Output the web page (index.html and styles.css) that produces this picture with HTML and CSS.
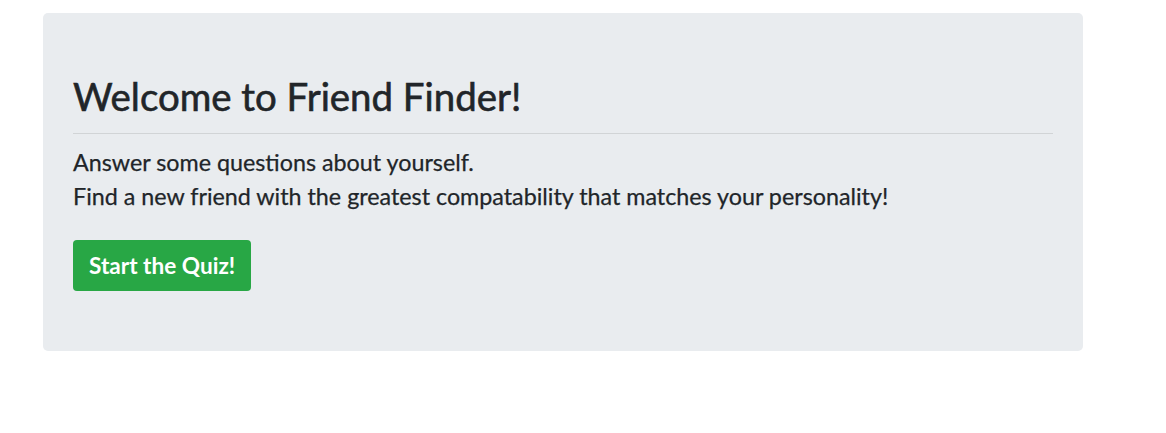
FILE: index.html
```html
<!DOCTYPE html>
<html lang="en">
<head>
<meta charset="utf-8">
<title>Friend Finder</title>
<link rel="stylesheet" href="styles.css">
</head>
<body>
<div class="container">
  <div class="jumbotron">
    <h1 class="title">Welcome to Friend Finder!</h1>
    <hr class="divider">
    <p class="lead">Answer some questions about yourself.<br>Find a new friend with the greatest compatability that matches your personality!</p>
    <a class="btn-start" href="#">Start the Quiz!</a>
  </div>
</div>
</body>
</html>
```
FILE: styles.css
```css
* { box-sizing: border-box; }
body {
  margin: 0;
  padding-top: 13px;
  background: #fff;
  color: #212529;
  font-family: "Lato", "Open Sans", sans-serif;
}
.container {
  width: 1040px;
  margin-left: 43px;
}
.jumbotron {
  background: #e9ecef;
  border-radius: 5px;
  padding: 59px 30px 60px;
}
.title {
  margin: 0;
  font-size: 38.4px;
  font-weight: 400;
  line-height: 48px;
  -webkit-text-stroke: 0.6px currentColor;
}
.divider {
  margin: 13px 0 0;
  border: 0;
  border-top: 1px solid rgba(0,0,0,0.1);
}
.lead {
  margin: 11px 0 0;
  font-size: 23.3px;
  line-height: 34px;
  -webkit-text-stroke: 0.25px currentColor;
}
.btn-start {
  display: inline-block;
  margin-top: 27px;
  background: #28a745;
  color: #fff;
  text-decoration: none;
  font-size: 22.6px;
  font-weight: 700;
  line-height: 33px;
  padding: 9px 16px;
  border-radius: 4px;
}
```
